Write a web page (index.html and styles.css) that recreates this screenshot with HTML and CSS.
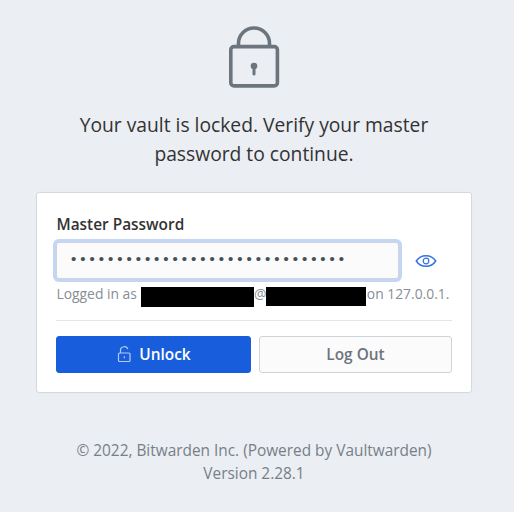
FILE: index.html
```html
<!DOCTYPE html>
<html lang="en">
<head>
<meta charset="utf-8">
<title>Vault locked</title>
<link rel="stylesheet" href="styles.css">
</head>
<body>
<main class="page">
  <svg class="lock" width="52" height="64" viewBox="0 0 52 64" fill="none" stroke="#6c757d" stroke-width="3.6">
    <rect x="2.8" y="21.6" width="46.6" height="39.3" rx="3.2"/>
    <path d="M10.500 21V18.500a15.5 15.5 0 0 1 31 0V21"/>
    <circle cx="26" cy="41" r="3.3" fill="#6c757d" stroke="none"/>
    <path d="M26 41v8" stroke-width="3" stroke-linecap="round"/>
  </svg>
  <p class="lead">Your vault is locked. Verify your master password to continue.</p>
  <form class="card">
    <label class="label" for="password">Master Password</label>
    <div class="field">
      <input class="input" id="password" type="password" value="abcdefghijklmnopqrstuvwxyz1234">
      <button class="toggle" type="button" aria-label="Toggle visibility">
        <svg width="22" height="14" viewBox="0 0 22 14" fill="none" stroke="#3472df" stroke-width="1.5">
          <path d="M1.300 7C3.500 3.500 6.7 1.700 11 1.700S18.500 3.500 20.700 7C18.500 10.500 15.300 12.300 11 12.300S3.500 10.500 1.300 7Z"/>
          <circle cx="11" cy="7" r="2.800" stroke-width="1.200"/>
        </svg>
      </button>
    </div>
    <div class="hint"><span>Logged in as</span><span class="mask mask-user"></span><span>@</span><span class="mask mask-host"></span><span>on 127.0.0.1.</span></div>
    <hr class="rule">
    <div class="actions">
      <button class="btn btn-primary" type="button">
        <svg width="14" height="17" viewBox="0 0 14 17" fill="none" stroke="#b4caf5" stroke-width="1.2">
          <rect x="1.500" y="7" width="11.500" height="8.500" rx="1"/>
          <path d="M3.500 7V4a3.700 3.200 0 0 1 7.300-.8"/>
          <path d="M7.300 10.300v2"/>
        </svg>
        <span>Unlock</span>
      </button>
      <button class="btn btn-outline" type="button">Log Out</button>
    </div>
  </form>
  <footer class="footer">© 2022, Bitwarden Inc. (Powered by Vaultwarden)<br>Version 2.28.1</footer>
</main>
</body>
</html>
```
FILE: styles.css
```css
* { box-sizing: border-box; }

body {
  margin: 0;
  height: 512px;
  overflow: hidden;
  background: #ebeef3;
  color: #333;
  font: 15.4px/1.5 "Open Sans", "Liberation Sans", sans-serif;
}

.page {
  display: flex;
  flex-direction: column;
  width: 434px;
  margin-left: 37px;
  padding-top: 25px;
}

.lock {
  display: block;
  margin-left: 191px;
}

.lead {
  margin: 22.4px 19px 0;
  font-size: 19.25px;
  line-height: 28.8px;
  text-align: center;
}

.card {
  height: 199px;
  margin-top: 24px;
  padding: 20px 19px 0;
  background: #fff;
  border-radius: 2px;
  box-shadow: 0 0 0 1px rgba(0, 0, 0, .05), 0 0 2px rgba(0, 0, 0, .15);
}

.label {
  display: block;
  height: 29.5px;
  padding-left: .5px;
  font-weight: 600;
  line-height: 24px;
}

.field {
  display: flex;
  align-items: center;
}

.input {
  width: 343px;
  height: 37px;
  padding: 0 12px 2px;
  border: 1px solid #ced4da;
  border-radius: 3px;
  outline: none;
  background: #fbfbfb;
  box-shadow: 0 0 0 3px #c5d5f6;
  color: #465057;
  font: 15.4px "Liberation Mono", monospace;
}

.toggle {
  display: flex;
  margin-left: 16px;
  padding: 0;
  border: 0;
  background: none;
}

.hint {
  display: flex;
  align-items: center;
  height: 20px;
  margin-top: 4.5px;
  padding-left: .5px;
  color: #868e96;
  font-size: 13.86px;
  white-space: nowrap;
}

.mask { background: #000; }

.mask-user {
  width: 113px;
  height: 20px;
  margin: 6px 0 0 4px;
}

.mask-host {
  width: 100px;
  height: 19px;
  margin-top: 6px;
}

.hint span:last-child { margin-left: .5px; }

.rule {
  margin: 16px 0 15px;
  border: 0;
  border-top: 1px solid #e5e5e5;
}

.actions {
  display: flex;
  gap: 8px;
}

.btn {
  display: flex;
  align-items: center;
  justify-content: center;
  gap: 8px;
  height: 37px;
  padding: 0;
  border: 1px solid #ced4da;
  border-radius: 3px;
  font: 600 15.4px/23px "Open Sans", "Liberation Sans", sans-serif;
}

.btn-primary {
  width: 195px;
  padding-left: 1px;
  border-color: #175ddc;
  background: #175ddc;
  color: #fff;
}

.btn-outline {
  flex: 1;
  background: #fbfbfb;
  color: #6c757d;
}

.footer {
  margin-top: 47px;
  color: #777f87;
  line-height: 23px;
  text-align: center;
}
```
